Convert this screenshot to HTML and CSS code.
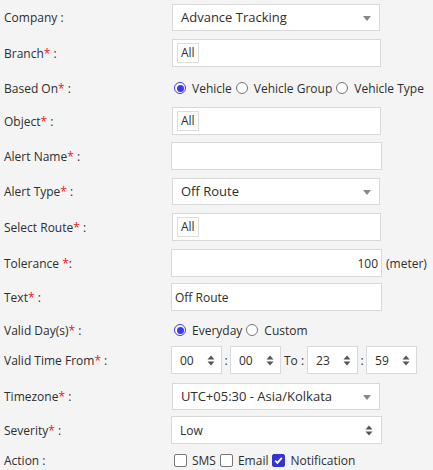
FILE: index.html
```html
<!DOCTYPE html>
<html>
<head>
<meta charset="utf-8">
<link rel="stylesheet" href="styles.css">
</head>
<body>
<div class="form">
  <div class="row m8">
    <div class="lbl">Company :</div>
    <div class="s2">Advance Tracking<span class="tri"></span></div>
  </div>
  <div class="row m8">
    <div class="lbl">Branch<span class="req">*</span> :</div>
    <div class="tags"><span class="tag">All</span></div>
  </div>
  <div class="row radio-row m6">
    <div class="lbl">Based On<span class="req">*</span> :</div>
    <div class="opts">
      <label class="opt"><span class="rad on"></span>Vehicle</label>
      <label class="opt"><span class="rad"></span>Vehicle Group</label>
      <label class="opt"><span class="rad"></span>Vehicle Type</label>
    </div>
  </div>
  <div class="row">
    <div class="lbl">Object<span class="req">*</span> :</div>
    <div class="tags"><span class="tag">All</span></div>
  </div>
  <div class="row">
    <div class="lbl">Alert Name<span class="req">*</span> :</div>
    <div class="inp"></div>
  </div>
  <div class="row m8">
    <div class="lbl">Alert Type<span class="req">*</span> :</div>
    <div class="s2">Off Route<span class="tri"></span></div>
  </div>
  <div class="row m8">
    <div class="lbl">Select Route<span class="req">*</span> :</div>
    <div class="tags"><span class="tag">All</span></div>
  </div>
  <div class="row m6">
    <div class="lbl">Tolerance <span class="req">*</span>:</div>
    <div class="inp right">100</div>
    <span class="unit">(meter)</span>
  </div>
  <div class="row m8">
    <div class="lbl">Text<span class="req">*</span> :</div>
    <div class="inp">Off Route</div>
  </div>
  <div class="row radio-row2 m5">
    <div class="lbl">Valid Day(s)<span class="req">*</span> :</div>
    <div class="opts">
      <label class="opt"><span class="rad on"></span>Everyday</label>
      <label class="opt"><span class="rad"></span>Custom</label>
    </div>
  </div>
  <div class="row m8">
    <div class="lbl">Valid Time From<span class="req">*</span> :</div>
    <div class="time">
      <div class="tbox">00<svg class="ud" width="8" height="11" viewBox="0 0 8 11"><path d="M4 0.5L7.5 4.5H0.5Z M4 10.5L7.5 6.5H0.5Z" fill="#555"/></svg></div>
      <span class="sep">:</span>
      <div class="tbox">00<svg class="ud" width="8" height="11" viewBox="0 0 8 11"><path d="M4 0.5L7.5 4.5H0.5Z M4 10.5L7.5 6.5H0.5Z" fill="#555"/></svg></div>
      <span class="to">To :</span>
      <div class="tbox">23<svg class="ud" width="8" height="11" viewBox="0 0 8 11"><path d="M4 0.5L7.5 4.5H0.5Z M4 10.5L7.5 6.5H0.5Z" fill="#555"/></svg></div>
      <span class="sep">:</span>
      <div class="tbox">59<svg class="ud" width="8" height="11" viewBox="0 0 8 11"><path d="M4 0.5L7.5 4.5H0.5Z M4 10.5L7.5 6.5H0.5Z" fill="#555"/></svg></div>
    </div>
  </div>
  <div class="row m6">
    <div class="lbl">Timezone<span class="req">*</span> :</div>
    <div class="s2">UTC+05:30 - Asia/Kolkata<span class="tri"></span></div>
  </div>
  <div class="row m8">
    <div class="lbl">Severity<span class="req">*</span> :</div>
    <div class="inp sel">Low<svg class="ud" width="8" height="11" viewBox="0 0 8 11"><path d="M4 0.5L7.5 4.5H0.5Z M4 10.5L7.5 6.5H0.5Z" fill="#555"/></svg></div>
  </div>
  <div class="row action-row">
    <div class="lbl">Action :</div>
    <div class="opts">
      <label class="opt"><span class="chk"></span>SMS</label>
      <label class="opt"><span class="chk"></span>Email</label>
      <label class="opt"><span class="chk on"><svg width="11" height="11" viewBox="0 0 11 11"><path d="M2.2 5.6L4.4 7.9L8.8 2.8" fill="none" stroke="#fff" stroke-width="1.8"/></svg></span>Notification</label>
    </div>
  </div>
</div>
</body>
</html>
```

FILE: styles.css
```css
html, body {
  margin: 0;
  padding: 0;
  background: #f4f4f4;
}
body {
  font-family: "Open Sans", "Liberation Sans", sans-serif;
  color: #2e2e2e;
  font-size: 12px;
}
.form {
  padding: 3px 0 0 4px;
  display: flex;
  flex-direction: column;
}
.row {
  display: flex;
  align-items: center;
  height: 28px;
  margin-bottom: 7px;
}
.m8 { margin-bottom: 8px; }
.m6 { margin-bottom: 6px; }
.m5 { margin-bottom: 5px; }
.radio-row { height: 26px; }
.radio-row2 { height: 22px; }
.action-row { height: 16px; }
.lbl {
  width: 167px;
  flex: none;
  font-size: 12px;
}
.req {
  color: #f0141e;
}
.s2 {
  box-sizing: border-box;
  width: 208px;
  height: 27px;
  margin-left: 1px;
  border: 1px solid #d8d8d8;
  background: #fff;
  font-size: 13px;
  display: flex;
  align-items: center;
  padding-left: 8px;
  position: relative;
}
.tri {
  position: absolute;
  right: 8px;
  top: 11px;
  width: 0;
  height: 0;
  border-left: 4px solid transparent;
  border-right: 4px solid transparent;
  border-top: 5px solid #888;
}
.tags, .inp {
  box-sizing: border-box;
  width: 211px;
  height: 28px;
  border: 1px solid #d8d8d8;
  background: #fff;
  display: flex;
  align-items: center;
}
.tags {
  width: 209px;
  margin-left: 1px;
  padding-left: 4px;
}
.tag {
  border: 1px solid #dedede;
  background: #fff;
  padding: 1px 3px;
  line-height: 16px;
  font-size: 12px;
}
.inp {
  padding: 0 3px;
  font-size: 12px;
}
.inp.right {
  justify-content: flex-end;
}
.inp.sel {
  padding: 0 8px;
  font-size: 12px;
  justify-content: space-between;
}
.unit {
  margin-left: 4px;
  font-size: 12px;
}
.opts {
  display: flex;
  align-items: center;
  margin-left: 3px;
  font-size: 12px;
}
.opt {
  display: flex;
  align-items: center;
  margin-right: 4px;
}
.rad {
  box-sizing: border-box;
  width: 12px;
  height: 12px;
  border-radius: 50%;
  border: 1px solid #767676;
  background: #fff;
  margin-right: 6px;
  position: relative;
}
.rad.on {
  border: 1px solid #3a3af0;
}
.rad.on::after {
  content: "";
  position: absolute;
  left: 1.5px;
  top: 1.5px;
  width: 7px;
  height: 7px;
  border-radius: 50%;
  background: #3a3af0;
}
.chk {
  box-sizing: border-box;
  width: 13px;
  height: 13px;
  border: 1px solid #767676;
  border-radius: 2px;
  background: #fff;
  margin-right: 5px;
  display: flex;
  align-items: center;
  justify-content: center;
}
.chk.on {
  background: #3434d4;
  border-color: #3434d4;
}
.time {
  display: flex;
  align-items: center;
}
.tbox {
  box-sizing: border-box;
  width: 51px;
  height: 28px;
  border: 1px solid #d8d8d8;
  background: #fff;
  display: flex;
  align-items: center;
  justify-content: space-between;
  padding: 0 6px 0 8px;
  font-size: 12px;
}
.sep {
  width: 8px;
  text-align: center;
  font-size: 12px;
}
.to {
  margin: 0 3px 0 3px;
  font-size: 12px;
}
```
